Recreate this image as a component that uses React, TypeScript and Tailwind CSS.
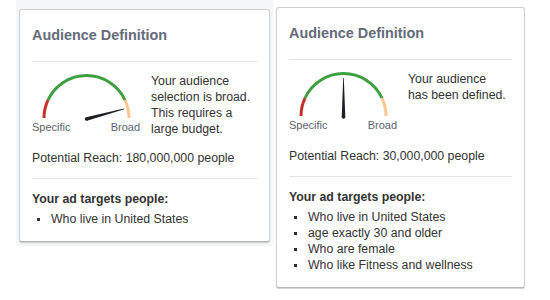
import React from "react";

function Gauge({ angle }: { angle: number }) {
  const cx = 54.5;
  const cy = 45;
  const r = 42.5;
  const pt = (deg: number) => {
    const a = (deg * Math.PI) / 180;
    return [cx + r * Math.cos(a), cy - r * Math.sin(a)];
  };
  const [x155, y155] = pt(155);
  const [x25, y25] = pt(25);
  const bx = 54.5;
  const by = 46;
  const len = 39;
  const a = (angle * Math.PI) / 180;
  const ux = Math.cos(a);
  const uy = -Math.sin(a);
  const px = -uy;
  const py = ux;
  const hw = 1.8;
  const tipx = bx + ux * len;
  const tipy = by + uy * len;
  const poly = `${bx + px * hw},${by + py * hw} ${tipx + px * 0.3},${tipy + py * 0.3} ${tipx - px * 0.3},${tipy - py * 0.3} ${bx - px * hw},${by - py * hw}`;
  return (
    <div className="w-[108px] shrink-0">
      <svg width="108" height="48" viewBox="0 0 108 48" className="block">
        <path d={`M ${cx - r} ${cy} A ${r} ${r} 0 0 1 ${x155} ${y155}`} fill="none" stroke="#c9302c" strokeWidth="3" />
        <path d={`M ${x155} ${y155} A ${r} ${r} 0 0 1 ${x25} ${y25}`} fill="none" stroke="#3d9f3d" strokeWidth="3" />
        <path d={`M ${x25} ${y25} A ${r} ${r} 0 0 1 ${cx + r} ${cy}`} fill="none" stroke="#fdc690" strokeWidth="3" />
        <polygon points={poly} fill="#1c1f24" />
        <circle cx={bx} cy={by} r={hw} fill="#1c1f24" />
      </svg>
      <div className="flex justify-between text-[11px] leading-[13px] text-[#5d636e]">
        <span>Specific</span>
        <span>Broad</span>
      </div>
    </div>
  );
}

function Card({
  width,
  angle,
  message,
  reach,
  items,
}: {
  width: string;
  angle: number;
  message: string;
  reach: string;
  items: string[];
}) {
  return (
    <div
      className={`${width} bg-white border border-[#cdd0d4] border-b-[#b4b7bc] rounded-[3px] shadow-[0_1px_1px_rgba(0,0,0,0.18)] px-[12px] pt-[15px] pb-[14px] text-[12.3px] leading-[16px] text-[#333]`}
    >
      <div className="text-[14.4px] leading-[20px] font-bold text-[#646b79]">Audience Definition</div>
      <div className="mt-[16px] h-px bg-[#e3e4e6]" />
      <div className="mt-[11px] h-[64px] flex">
        <Gauge angle={angle} />
        <div className="ml-[11px] w-[101px]">{message}</div>
      </div>
      <div className="mt-[13px]">Potential Reach: {reach} people</div>
      <div className="mt-[12px] h-px bg-[#e3e4e6]" />
      <div className="mt-[12px] font-bold">Your ad targets people:</div>
      <ul className="mt-[4px]">
        {items.map((it) => (
          <li key={it} className="flex">
            <span className="mt-[7px] ml-[5px] mr-[11px] w-[3px] h-[3px] bg-[#333] shrink-0" />
            <span>{it}</span>
          </li>
        ))}
      </ul>
    </div>
  );
}

export default function App() {
  return (
    <div className="flex items-start w-[550px] h-[300px] bg-white font-['Liberation_Sans',Arial,sans-serif]">
      <div className="ml-[16px] w-[257px] h-[246px] bg-[#f5f6f8] pt-[9px] pl-[3px]">
        <Card
          width="w-[251px]"
          angle={15}
          message="Your audience selection is broad. This requires a large budget."
          reach="180,000,000"
          items={["Who live in United States"]}
        />
      </div>
      <div className="ml-[3px] mt-[7px]">
        <Card
          width="w-[249px]"
          angle={90}
          message="Your audience has been defined."
          reach="30,000,000"
          items={[
            "Who live in United States",
            "age exactly 30 and older",
            "Who are female",
            "Who like Fitness and wellness",
          ]}
        />
      </div>
    </div>
  );
}
